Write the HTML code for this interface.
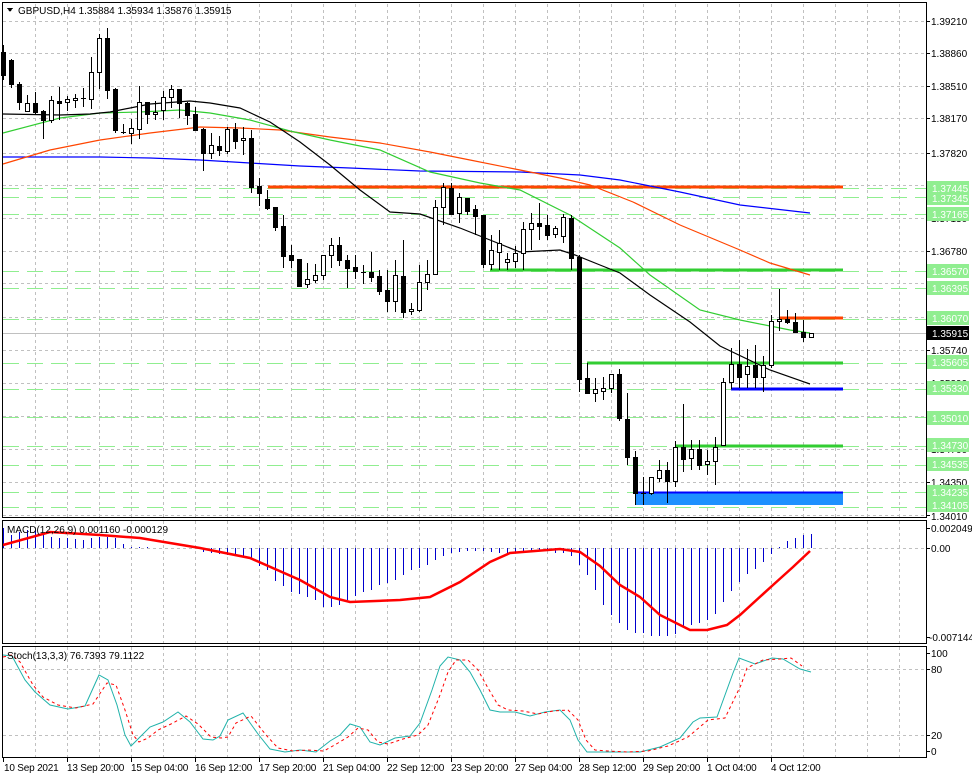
<!DOCTYPE html>
<html><head><meta charset="utf-8"><style>
html,body{margin:0;padding:0;background:#fff;}
svg{display:block;font-family:"Liberation Sans",sans-serif;font-size:10px;}
rect.b{fill:#000;stroke:#000;stroke-width:1;width:4px;}
rect.w{fill:#fff;stroke:#000;stroke-width:1;width:4px;}
.g{stroke:#c0c0c0;stroke-dasharray:3,3;stroke-width:1;fill:none}
.lg{stroke:#90ee90;stroke-dasharray:16,8;stroke-width:1;fill:none}
.gl rect{fill:#90ee90}
.gl text{fill:#fff}
.t text{letter-spacing:-0.2px}
</style></head><body>
<svg width="972" height="778" viewBox="0 0 972 778" xmlns="http://www.w3.org/2000/svg" shape-rendering="crispEdges">
<rect width="972" height="778" fill="#fff"/>
<path class="g" d="M35.5 4V517M67.5 4V517M99.5 4V517M131.5 4V517M163.5 4V517M195.5 4V517M227.5 4V517M259.5 4V517M291.5 4V517M323.5 4V517M355.5 4V517M387.5 4V517M419.5 4V517M451.5 4V517M483.5 4V517M515.5 4V517M547.5 4V517M579.5 4V517M611.5 4V517M643.5 4V517M675.5 4V517M707.5 4V517M739.5 4V517M771.5 4V517M803.5 4V517M835.5 4V517M867.5 4V517M899.5 4V517
M35.5 521V643M67.5 521V643M99.5 521V643M131.5 521V643M163.5 521V643M195.5 521V643M227.5 521V643M259.5 521V643M291.5 521V643M323.5 521V643M355.5 521V643M387.5 521V643M419.5 521V643M451.5 521V643M483.5 521V643M515.5 521V643M547.5 521V643M579.5 521V643M611.5 521V643M643.5 521V643M675.5 521V643M707.5 521V643M739.5 521V643M771.5 521V643M803.5 521V643M835.5 521V643M867.5 521V643M899.5 521V643
M35.5 647V757M67.5 647V757M99.5 647V757M131.5 647V757M163.5 647V757M195.5 647V757M227.5 647V757M259.5 647V757M291.5 647V757M323.5 647V757M355.5 647V757M387.5 647V757M419.5 647V757M451.5 647V757M483.5 647V757M515.5 647V757M547.5 647V757M579.5 647V757M611.5 647V757M643.5 647V757M675.5 647V757M707.5 647V757M739.5 647V757M771.5 647V757M803.5 647V757M835.5 647V757M867.5 647V757M899.5 647V757"/>
<path class="g" d="M3 21.5H926M3 53.5H926M3 86.5H926M3 118.5H926M3 153.5H926M3 185.5H926M3 218.5H926M3 251.5H926M3 283.5H926M3 317.5H926M3 350.5H926M3 383.5H926M3 416.5H926M3 449.5H926M3 482.5H926M3 515.5H926
M3 548.5H926M3 669.5H926M3 735.5H926"/>
<path class="lg" d="M3 188.5H926M3 197.5H926M3 214.5H926M3 271.5H926M3 288.5H926M3 319.5H926M3 363.5H926M3 389.5H926M3 417.5H926M3 446.5H926M3 465.5H926M3 492.5H926M3 507.5H926"/>
<path d="M3 333.5H926" stroke="#c0c0c0"/>
<rect x="635" y="492" width="208" height="13" fill="#1e90ff"/>
<path d="M635 492.5H843" stroke="#0000ff" stroke-width="2"/>
<g stroke-width="3" fill="none">
<path d="M268 187H843" stroke="#ff4500"/>
<path d="M490 270H843" stroke="#32cd32"/>
<path d="M779 318H843" stroke="#ff4500"/>
<path d="M587 363H843" stroke="#32cd32"/>
<path d="M675 446H843" stroke="#32cd32"/>
<path d="M731 389H843" stroke="#0000ff"/>
</g>
<g fill="none" stroke-width="1.2" shape-rendering="auto">
<polyline stroke="#0000ff" points="3,157 100,157 150,158 200,160 250,163 300,166 350,168 420,171 520,172 580,175 620,180 680,192 740,205 810,213"/>
<polyline stroke="#ff4500" points="3,164 50,150 100,140 150,133 200,127 240,128 280,130 330,137 380,143 430,152 470,160 520,170 560,178 590,185 633,202 680,225 740,250 770,263 810,275"/>
<polyline stroke="#32cd32" points="3,133 60,118 100,113 140,112 180,110 210,113 250,120 290,131 330,140 380,150 430,172 480,183 520,190 570,215 620,248 650,275 700,310 740,320 790,330 810,333"/>
<polyline stroke="#000" points="3,114 60,115 90,114 110,112 150,104 190,101 210,103 240,108 270,122 300,142 330,165 360,190 390,212 420,214 460,228 490,240 520,252 560,250 575,255 600,265 620,273 650,295 690,322 720,346 770,370 810,384"/>
</g>
<path stroke="#000" stroke-width="1" fill="none" d="M3.5 45V80M11.5 59V88M19.5 82V110M27.5 95V112M35.5 92V115M43.5 110V139M51.5 96V123M59.5 87V120M67.5 96V111M75.5 94V108M83.5 88V107M91.5 57V109M99.5 34V89M107.5 28V99M115.5 88V133M123.5 124V134M131.5 119V144M139.5 86V139M147.5 102V124M155.5 101V120M163.5 91V120M171.5 85V108M179.5 89V118M187.5 102V125M195.5 107V130M203.5 128V171M211.5 133V159M219.5 136V156M227.5 127V154M235.5 123V149M243.5 127V155M251.5 130V193M259.5 178V206M267.5 190V210M275.5 207V231M283.5 215V268M291.5 245V268M299.5 259V286M307.5 263V288M315.5 264V283M323.5 255V280M331.5 238V268M339.5 237V266M347.5 255V288M355.5 255V279M363.5 265V284M371.5 252V282M379.5 270V295M387.5 270V312M395.5 260V312M403.5 240V318M411.5 303V315M419.5 265V312M427.5 260V290M435.5 200V275M443.5 183V225M451.5 183V214M459.5 193V223M467.5 198V215M475.5 205V235M483.5 215V268M491.5 235V270M499.5 230V270M507.5 253V270M515.5 246V268M523.5 222V270M531.5 213V250M539.5 203V240M547.5 215V240M555.5 226V238M563.5 214V243M571.5 215V270M579.5 255V392M587.5 363V393M595.5 378V402M603.5 377V400M611.5 374V393M619.5 369V421M627.5 393V465M635.5 451V505M643.5 477V505M651.5 477V495M659.5 460V482M667.5 462V503M675.5 441V487M683.5 404V472M691.5 440V470M699.5 440V470M707.5 450V475M715.5 437V485M723.5 378V445M731.5 348V389M739.5 340V388M747.5 349V388M755.5 345V388M763.5 356V392M771.5 315V368M779.5 289V331M787.5 310V324M795.5 313V333M803.5 320V342M811.5 333V338
M81 98.5H86M121 132.5H126M361 272.5H366M641 493.5H646"/>
<g>
<rect class="b" x="1.5" y="52.5" height="23"/><rect class="b" x="9.5" y="60.5" height="24"/><rect class="b" x="17.5" y="84.5" height="18"/><rect class="w" x="25.5" y="103.5" height="8"/><rect class="b" x="33.5" y="103.5" height="9"/><rect class="b" x="41.5" y="111.5" height="9"/><rect class="w" x="49.5" y="100.5" height="20"/><rect class="b" x="57.5" y="101.5" height="2"/><rect class="w" x="65.5" y="99.5" height="3"/><rect class="w" x="73.5" y="98.5" height="2"/>
<rect class="w" x="89.5" y="72.5" height="27"/><rect class="w" x="97.5" y="38.5" height="34"/><rect class="b" x="105.5" y="38.5" height="52"/><rect class="b" x="113.5" y="89.5" height="41"/><rect class="w" x="129.5" y="128.5" height="5"/><rect class="w" x="137.5" y="102.5" height="27"/><rect class="b" x="145.5" y="102.5" height="12"/><rect class="w" x="153.5" y="112.5" height="2"/><rect class="w" x="161.5" y="97.5" height="13"/><rect class="w" x="169.5" y="89.5" height="8"/>
<rect class="b" x="177.5" y="89.5" height="14"/><rect class="b" x="185.5" y="103.5" height="12"/><rect class="b" x="193.5" y="114.5" height="16"/><rect class="b" x="201.5" y="129.5" height="24"/><rect class="w" x="209.5" y="145.5" height="8"/><rect class="b" x="217.5" y="146.5" height="4"/><rect class="w" x="225.5" y="129.5" height="22"/><rect class="b" x="233.5" y="129.5" height="12"/><rect class="w" x="241.5" y="138.5" height="2"/><rect class="b" x="249.5" y="138.5" height="49"/>
<rect class="b" x="257.5" y="186.5" height="7"/><rect class="b" x="265.5" y="199.5" height="9"/><rect class="b" x="273.5" y="207.5" height="20"/><rect class="b" x="281.5" y="226.5" height="30"/><rect class="b" x="289.5" y="255.5" height="5"/><rect class="b" x="297.5" y="259.5" height="27"/><rect class="w" x="305.5" y="279.5" height="5"/><rect class="w" x="313.5" y="275.5" height="5"/><rect class="w" x="321.5" y="255.5" height="20"/><rect class="w" x="329.5" y="245.5" height="10"/>
<rect class="b" x="337.5" y="245.5" height="15"/><rect class="b" x="345.5" y="260.5" height="8"/><rect class="b" x="353.5" y="267.5" height="4"/><rect class="b" x="369.5" y="272.5" height="5"/><rect class="b" x="377.5" y="276.5" height="15"/><rect class="b" x="385.5" y="290.5" height="11"/><rect class="w" x="393.5" y="275.5" height="26"/><rect class="b" x="401.5" y="276.5" height="36"/><rect class="w" x="409.5" y="309.5" height="2"/><rect class="w" x="417.5" y="282.5" height="28"/>
<rect class="w" x="425.5" y="274.5" height="8"/><rect class="w" x="433.5" y="207.5" height="67"/><rect class="w" x="441.5" y="187.5" height="20"/><rect class="b" x="449.5" y="188.5" height="26"/><rect class="w" x="457.5" y="197.5" height="16"/><rect class="b" x="465.5" y="198.5" height="13"/><rect class="b" x="473.5" y="209.5" height="7"/><rect class="b" x="481.5" y="215.5" height="49"/><rect class="w" x="489.5" y="250.5" height="14"/><rect class="w" x="497.5" y="243.5" height="9"/>
<rect class="w" x="505.5" y="259.5" height="3"/><rect class="w" x="513.5" y="253.5" height="8"/><rect class="w" x="521.5" y="229.5" height="24"/><rect class="w" x="529.5" y="223.5" height="6"/><rect class="b" x="537.5" y="223.5" height="3"/><rect class="b" x="545.5" y="225.5" height="10"/><rect class="w" x="553.5" y="228.5" height="6"/><rect class="w" x="561.5" y="217.5" height="19"/><rect class="b" x="569.5" y="218.5" height="40"/><rect class="b" x="577.5" y="257.5" height="122"/>
<rect class="b" x="585.5" y="378.5" height="15"/><rect class="w" x="593.5" y="389.5" height="4"/><rect class="w" x="601.5" y="388.5" height="3"/><rect class="w" x="609.5" y="374.5" height="14"/><rect class="b" x="617.5" y="374.5" height="44"/><rect class="b" x="625.5" y="419.5" height="38"/><rect class="b" x="633.5" y="457.5" height="36"/><rect class="w" x="649.5" y="477.5" height="16"/><rect class="w" x="657.5" y="470.5" height="8"/><rect class="b" x="665.5" y="470.5" height="11"/>
<rect class="w" x="673.5" y="447.5" height="34"/><rect class="b" x="681.5" y="447.5" height="12"/><rect class="w" x="689.5" y="449.5" height="9"/><rect class="b" x="697.5" y="449.5" height="16"/><rect class="w" x="705.5" y="461.5" height="3"/><rect class="w" x="713.5" y="447.5" height="14"/><rect class="w" x="721.5" y="382.5" height="63"/><rect class="w" x="729.5" y="364.5" height="18"/><rect class="b" x="737.5" y="364.5" height="13"/><rect class="w" x="745.5" y="366.5" height="8"/>
<rect class="b" x="753.5" y="365.5" height="12"/><rect class="w" x="761.5" y="365.5" height="12"/><rect class="w" x="769.5" y="321.5" height="44"/><rect class="w" x="777.5" y="319.5" height="2"/><rect class="b" x="785.5" y="319.5" height="3"/><rect class="b" x="793.5" y="322.5" height="10"/><rect class="b" x="801.5" y="332.5" height="5"/><rect class="w" x="809.5" y="333.5" height="4"/>
</g>
<path stroke="#0000cd" stroke-width="1" fill="none" d="M3.5 548V528M11.5 548V535M19.5 548V532M27.5 548V530M35.5 548V530M43.5 548V535M51.5 548V537M59.5 548V538M67.5 548V538M75.5 548V539M83.5 548V540M91.5 548V538M99.5 548V537M107.5 548V537M115.5 548V538M123.5 548V544M131.5 548V547M139.5 548V547M147.5 548V547M163.5 549V549M203.5 548V552M211.5 548V553M219.5 548V554M227.5 548V555M235.5 548V555M243.5 548V557M251.5 548V559M259.5 548V566M267.5 548V570M275.5 548V581M283.5 548V586M291.5 548V592M299.5 548V594M307.5 548V597M315.5 548V600M323.5 548V607M331.5 548V607M339.5 548V605M347.5 548V600M355.5 548V596M363.5 548V592M371.5 548V590M379.5 548V585M387.5 548V583M395.5 548V580M403.5 548V575M411.5 548V570M419.5 548V568M427.5 548V565M435.5 548V560M443.5 548V556M451.5 548V553M459.5 548V552M467.5 548V551M475.5 548V551M483.5 548V551M491.5 548V552M499.5 548V553M507.5 548V553M515.5 548V552M523.5 548V552M531.5 548V551M539.5 548V551M547.5 548V551M555.5 548V553M563.5 548V553M571.5 548V556M579.5 548V565M587.5 548V575M595.5 548V590M603.5 548V605M611.5 548V615M619.5 548V623M627.5 548V630M635.5 548V633M643.5 548V633M651.5 548V636M659.5 548V636M667.5 548V636M675.5 548V634M683.5 548V627M691.5 548V625M699.5 548V623M707.5 548V620M715.5 548V614M723.5 548V602M731.5 548V591M739.5 548V582M747.5 548V574M755.5 548V569M763.5 548V562M771.5 548V554M779.5 548V547M787.5 548V541M795.5 548V538M803.5 548V535M811.5 548V534"/>
<polyline fill="none" stroke="#ff0000" stroke-width="2.5" shape-rendering="auto" points="3,545 50,532 100,535 140,538 200,548 250,558 300,580 330,597 350,602 400,600 430,597 460,582 490,562 510,553 560,549 580,552 600,566 620,585 640,597 660,615 690,630 707,630 727,625 740,615 773,585 793,567 810,551"/>
<polyline fill="none" stroke="#20b2aa" stroke-width="1" shape-rendering="auto" points="3,655 12,656 25,680 35,692 50,705 68,709 85,706 99,675 108,680 117,705 125,735 131,746 140,737 150,727 163,722 178,712 190,722 203,739 213,740 220,736 228,720 243,713 258,734 270,749 285,752 300,750 316,752 330,741 340,735 350,724 360,727 370,742 380,745 395,738 410,736 420,723 432,690 440,666 448,657 460,660 470,672 480,690 490,710 500,712 515,712 530,716 545,712 560,710 570,720 578,740 587,752 600,752 620,752 640,752 660,747 680,738 693,722 700,718 717,717 733,673 739,658 755,664 772,658 783,659 800,669 811,672"/>
<polyline fill="none" stroke="#ff0000" stroke-width="1" stroke-dasharray="3,3" shape-rendering="auto" points="3,657 12,655 20,662 33,685 43,697 58,705 76,708 93,704 107,683 116,685 125,710 133,735 139,742 148,738 158,730 171,724 186,716 198,724 211,737 221,738 228,737 236,723 251,716 266,735 278,748 293,751 308,750 324,751 338,743 348,737 358,728 368,730 378,742 388,744 403,739 418,735 428,725 440,695 448,672 456,660 468,660 478,670 488,688 498,705 508,710 523,711 538,714 553,711 568,710 578,720 586,740 595,750 608,751 628,752 648,751 668,746 688,737 701,726 708,720 725,718 741,685 747,668 763,660 780,659 791,658 802,666"/>
<g fill="none" stroke="#000" stroke-width="1">
<rect x="2.5" y="2.5" width="924" height="515"/>
<rect x="2.5" y="520.5" width="924" height="123"/>
<rect x="2.5" y="646.5" width="924" height="111"/>
<path d="M926 21.5H930M926 53.5H930M926 86.5H930M926 118.5H930M926 153.5H930M926 251.5H930M926 350.5H930M926 482.5H930M926 515.5H930M926 528.5H930M926 548.5H930M926 637.5H930M926 653.5H930M926 669.5H930M926 735.5H930M926 751.5H930"/>
<path d="M3.5 757V762M67.5 757V762M131.5 757V762M195.5 757V762M259.5 757V762M323.5 757V762M387.5 757V762M451.5 757V762M515.5 757V762M579.5 757V762M643.5 757V762M707.5 757V762M771.5 757V762"/>
</g>
<g fill="#000">
<text x="931" y="25">1.39210</text><text x="931" y="57">1.38860</text><text x="931" y="90">1.38510</text><text x="931" y="122">1.38170</text><text x="931" y="157">1.37820</text><text x="931" y="222">1.37130</text><text x="931" y="255">1.36780</text><text x="931" y="354">1.35740</text><text x="931" y="387">1.35390</text><text x="931" y="453">1.34700</text><text x="931" y="486">1.34350</text><text x="931" y="520">1.34010</text>
<text x="931" y="532">0.002049</text><text x="931" y="552">0.00</text><text x="929" y="641">-0.007144</text>
<text x="931" y="657">100</text><text x="931" y="673">80</text><text x="931" y="739">20</text><text x="931" y="755">0</text>
</g>
<g class="gl">
<rect x="927" y="181" width="42" height="24"/><text x="932" y="192">1.37445</text><text x="932" y="202">1.37345</text>
<rect x="927" y="207" width="42" height="14"/><text x="932" y="218">1.37165</text>
<rect x="927" y="264" width="42" height="14"/><text x="932" y="275">1.36570</text>
<rect x="927" y="281" width="42" height="14"/><text x="932" y="292">1.36395</text>
<rect x="927" y="311" width="42" height="14"/><text x="932" y="322">1.36070</text>
<rect x="927" y="355" width="42" height="14"/><text x="932" y="366">1.35605</text>
<rect x="927" y="381" width="42" height="14"/><text x="932" y="392">1.35330</text>
<rect x="927" y="411" width="42" height="14"/><text x="932" y="422">1.35010</text>
<rect x="927" y="438" width="42" height="14"/><text x="932" y="449">1.34730</text>
<rect x="927" y="457" width="42" height="14"/><text x="932" y="468">1.34535</text>
<rect x="927" y="485" width="42" height="14"/><text x="932" y="496">1.34235</text>
<rect x="927" y="498" width="42" height="14"/><text x="932" y="509">1.34105</text>
</g>
<rect x="927" y="326" width="42" height="14" fill="#000"/><text x="932" y="337" fill="#fff">1.35915</text>
<path d="M7 8H13L10 12Z" fill="#000"/>
<text x="18" y="14" fill="#000">GBPUSD,H4  1.35884 1.35934 1.35876 1.35915</text>
<text x="7" y="533" fill="#000">MACD(12,26,9) 0.001160 -0.000129</text>
<text x="7" y="659" fill="#000">Stoch(13,3,3) 76.7393 79.1122</text>
<g fill="#000" class="t">
<text x="4" y="771">10 Sep 2021</text><text x="67" y="771">13 Sep 20:00</text><text x="131" y="771">15 Sep 04:00</text><text x="195" y="771">16 Sep 12:00</text><text x="259" y="771">17 Sep 20:00</text><text x="323" y="771">21 Sep 04:00</text><text x="387" y="771">22 Sep 12:00</text><text x="451" y="771">23 Sep 20:00</text><text x="515" y="771">27 Sep 04:00</text><text x="579" y="771">28 Sep 12:00</text><text x="643" y="771">29 Sep 20:00</text><text x="707" y="771">1 Oct 04:00</text><text x="771" y="771">4 Oct 12:00</text>
</g>
</svg>
</body></html>
